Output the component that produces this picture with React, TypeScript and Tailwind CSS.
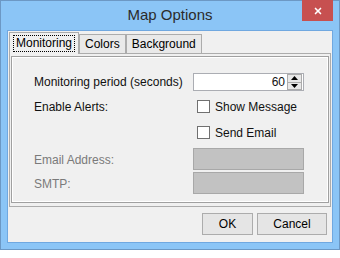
import { X } from "lucide-react";

const font = "font-['Liberation_Sans',Arial,sans-serif]";

function Checkbox({ label }: { label: string }) {
	return (
		<label className="flex items-center gap-[5px] pl-[4px] text-[12px] text-[#111]">
			<span className="h-[13px] w-[13px] border border-[#707070] bg-white" />
			{label}
		</label>
	);
}

function Spinner({ value }: { value: number }) {
	return (
		<div className="flex h-[18px] w-[111px] items-center border border-[#abadb3] bg-white pr-[1px]">
			<span className="flex-1 pr-[2px] text-right text-[12px] text-[#111]">{value}</span>
			<div className="flex h-[16px] w-[15px] flex-col border border-[#acacac]">
				<button className="flex flex-1 items-center justify-center border-b border-[#acacac] bg-[#e8e8e8]">
					<svg width="7" height="4" viewBox="0 0 7 4">
						<path d="M3.5 0L7 4H0z" fill="#000" />
					</svg>
				</button>
				<button className="flex flex-1 items-center justify-center bg-[#e8e8e8]">
					<svg width="7" height="4" viewBox="0 0 7 4">
						<path d="M0 0h7L3.5 4z" fill="#000" />
					</svg>
				</button>
			</div>
		</div>
	);
}

export default function App() {
	const tabs = ["Monitoring", "Colors", "Background"];

	return (
		<div className={`h-[258px] w-[340px] bg-white ${font}`}>
			<div className="flex h-[250px] w-[340px] flex-col border border-[#6c98c4] bg-[#8bc5f6] px-[6px] pb-[6px]">
				{/* title bar */}
				<div className="relative flex h-[29px] shrink-0 items-center justify-center">
					<span className="pb-[1px] text-[15px] text-[#2b2b2b]">Map Options</span>
					<button className="absolute right-[0px] top-[-1px] flex h-[21px] w-[31px] items-center justify-center bg-[#c75050]">
						<X className="h-[10px] w-[10px] text-white" strokeWidth={4} />
					</button>
				</div>

				{/* client area */}
				<div className="flex flex-1 flex-col border border-[#70a8e0] bg-[#f0f0f0] pl-[1px] pr-[1px] pt-[1px]">
					<div className="flex h-[21px] items-end">
						{tabs.map((t, i) =>
							i === 0 ? (
								<div
									key={t}
									className="relative z-10 -mb-px flex h-[22px] items-center border border-b-0 border-[#acacac] bg-[#f0f0f0] px-[3px]"
								>
									<span className="border border-dotted border-black px-[2px] text-[12px] leading-[15px] text-black">
										{t}
									</span>
								</div>
							) : (
								<div
									key={t}
									className="flex h-[19px] items-center border border-b-0 border-[#acacac] bg-[#e9e9e9] px-[5px] text-[12px] text-black"
								>
									{t}
								</div>
							)
						)}
					</div>

					{/* tab pane */}
					<div className="h-[154px] border border-[#acacac] px-px pb-[3px] pt-[2px]">
						<div className="h-full border border-[#a0a0a0]">
							<div className="flex h-full flex-col border border-white pl-[21px] pt-[15px] text-[12px]">
								<div className="flex h-[18px] items-center">
									<span className="w-[159px] text-[#111]">Monitoring period (seconds)</span>
									<Spinner value={60} />
								</div>
								<div className="mt-[7px] flex h-[17px] items-center">
									<span className="w-[159px] text-[#111]">Enable Alerts:</span>
									<Checkbox label="Show Message" />
								</div>
								<div className="mt-[9px] flex h-[17px] items-center">
									<span className="w-[159px]" />
									<Checkbox label="Send Email" />
								</div>
								<div className="mt-[7px] flex h-[22px] items-center">
									<span className="w-[159px] pt-[2px] text-[#7a7a7a]">Email Address:</span>
									<div className="h-[22px] w-[111px] border border-[#a8a8a8] bg-[#c2c2c2]" />
								</div>
								<div className="mt-[2px] flex h-[22px] items-center">
									<span className="w-[159px] pt-[2px] text-[#7a7a7a]">SMTP:</span>
									<div className="h-[22px] w-[111px] border border-[#a8a8a8] bg-[#c2c2c2]" />
								</div>
							</div>
						</div>
					</div>

					{/* buttons */}
					<div className="flex justify-end gap-[4px] pr-[4px] pt-[6px]">
						<button className="h-[22px] w-[51px] border border-[#acacac] bg-[#e5e5e5] text-[12px] text-black">
							OK
						</button>
						<button className="h-[22px] w-[70px] border border-[#acacac] bg-[#e5e5e5] text-[12px] text-black">
							Cancel
						</button>
					</div>
				</div>
			</div>
		</div>
	);
}
